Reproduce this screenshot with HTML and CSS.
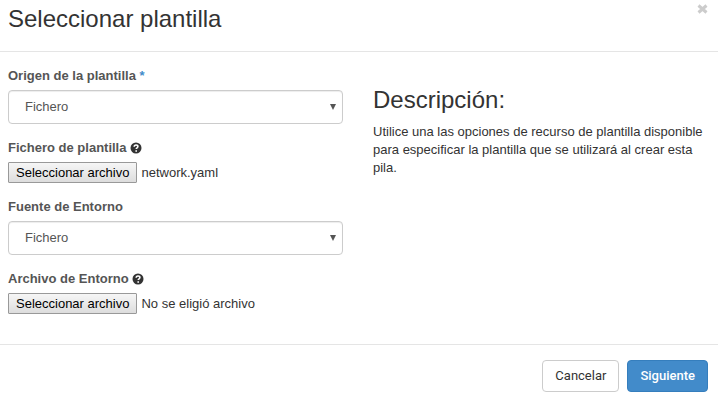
FILE: index.html
```html
<!DOCTYPE html>
<html lang="es">
<head>
<meta charset="utf-8">
<meta name="viewport" content="width=device-width, initial-scale=1">
<title>Seleccionar plantilla</title>
<link rel="stylesheet" href="styles.css">
</head>
<body>
<form class="modal">
  <header class="modal-header">
    <h1 class="title">Seleccionar plantilla</h1>
    <button type="button" class="close" aria-label="Cerrar">
      <svg width="11" height="10" viewBox="0 0 11 10" aria-hidden="true"><path d="M1.500 1.500l8 7M9.500 1.500l-8 7"/></svg>
    </button>
  </header>
  <div class="modal-body">
    <div class="fields">
      <div class="field">
        <label class="label" for="source">Origen de la plantilla <span class="required">*</span></label>
        <div class="select-wrap">
          <select class="select" id="source"><option>Fichero</option></select>
        </div>
      </div>
      <div class="field">
        <label class="label" for="template">Fichero de plantilla
          <svg class="help" viewBox="0 0 12 12" aria-hidden="true"><circle cx="6" cy="6" r="5.500"/><path d="M4.200 4.700c0-2.300 3.700-2.200 3.700-.1 0 1.200-1.700 1.200-1.700 2.500M6.200 8.200v1.500"/></svg>
        </label>
        <div class="file">
          <input class="file-input" type="file" id="template">
          <span class="file-button">Seleccionar archivo</span>
          <span>network.yaml</span>
        </div>
      </div>
      <div class="field">
        <label class="label" for="env-source">Fuente de Entorno</label>
        <div class="select-wrap">
          <select class="select" id="env-source"><option>Fichero</option></select>
        </div>
      </div>
      <div class="field">
        <label class="label" for="env-file">Archivo de Entorno
          <svg class="help" viewBox="0 0 12 12" aria-hidden="true"><circle cx="6" cy="6" r="5.500"/><path d="M4.200 4.700c0-2.300 3.700-2.200 3.700-.1 0 1.200-1.700 1.200-1.700 2.500M6.200 8.200v1.500"/></svg>
        </label>
        <div class="file">
          <input class="file-input" type="file" id="env-file">
          <span class="file-button">Seleccionar archivo</span>
          <span>No se eligió archivo</span>
        </div>
      </div>
    </div>
    <section class="description">
      <h2 class="title">Descripción:</h2>
      <p class="text">Utilice una las opciones de recurso de plantilla disponible para especificar la plantilla que se utilizará al crear esta pila.</p>
    </section>
  </div>
  <footer class="modal-footer">
    <button type="button" class="btn">Cancelar</button>
    <button type="submit" class="btn btn-primary">Siguiente</button>
  </footer>
</form>
</body>
</html>
```
FILE: styles.css
```css
* { box-sizing: border-box; }
body {
  margin: 0;
  background: #fff;
  color: #333;
  font: 13px/18px "Liberation Sans", Arial, sans-serif;
}
.title {
  margin: 0;
  font-size: 24px;
  font-weight: 400;
  line-height: 26px;
}
.modal-header {
  display: flex;
  justify-content: space-between;
  align-items: flex-start;
  padding: 4px 10px 19px 8px;
  border-bottom: 1px solid #e5e5e5;
}
.modal-header .title { padding-top: 2px; }
.close {
  display: flex;
  padding: 0;
  border: 0;
  background: none;
}
.close path { stroke: #ccc; stroke-width: 3; }
.modal-body {
  display: grid;
  grid-template-columns: 1fr 1fr;
  gap: 30px;
  padding: 15px 10px 30px 8px;
}
.fields {
  display: flex;
  flex-direction: column;
  gap: 15px;
}
.label {
  display: block;
  margin-bottom: 5px;
  color: #555;
  font-weight: 700;
}
.required { color: #428bca; }
.help {
  width: 12px;
  height: 12px;
  vertical-align: -2px;
}
.help circle { fill: #333; }
.help path { fill: none; stroke: #fff; stroke-width: 1.600; }
.select-wrap { position: relative; }
.select-wrap::after {
  content: "";
  position: absolute;
  top: 14px;
  right: 7px;
  border: 3px solid transparent;
  border-top: 6px solid #555;
  border-bottom: 0;
  pointer-events: none;
}
.select {
  display: block;
  width: 100%;
  height: 34px;
  padding: 6px 16px;
  border: 1px solid #ccc;
  border-radius: 4px;
  background: #fff;
  box-shadow: inset 0 1px 1px rgba(0, 0, 0, .075);
  color: #555;
  font: inherit;
  appearance: none;
}
.file {
  position: relative;
  display: flex;
  align-items: center;
  gap: 4px;
}
.file-input {
  position: absolute;
  inset: 0;
  width: 100%;
  opacity: 0;
}
.file-button {
  padding: 0 7px;
  border: 1px solid #999;
  border-radius: 1px;
  background: linear-gradient(#f6f6f6, #ddd);
  color: #000;
  line-height: 19px;
}
.description { padding-top: 20px; }
.text { margin: 10px 0 0; }
.modal-footer {
  display: flex;
  justify-content: flex-end;
  gap: 8px;
  padding: 15px 10px 10px;
  border-top: 1px solid #e5e5e5;
}
.btn {
  padding: 6px 12px;
  border: 1px solid #ccc;
  border-radius: 4px;
  background: #fff;
  color: #333;
  font: 13px/18px Roboto, "Liberation Sans", sans-serif;
}
.btn-primary {
  border-color: #357ebd;
  background: #428bca;
  color: #fff;
  font-weight: 500;
}
```
